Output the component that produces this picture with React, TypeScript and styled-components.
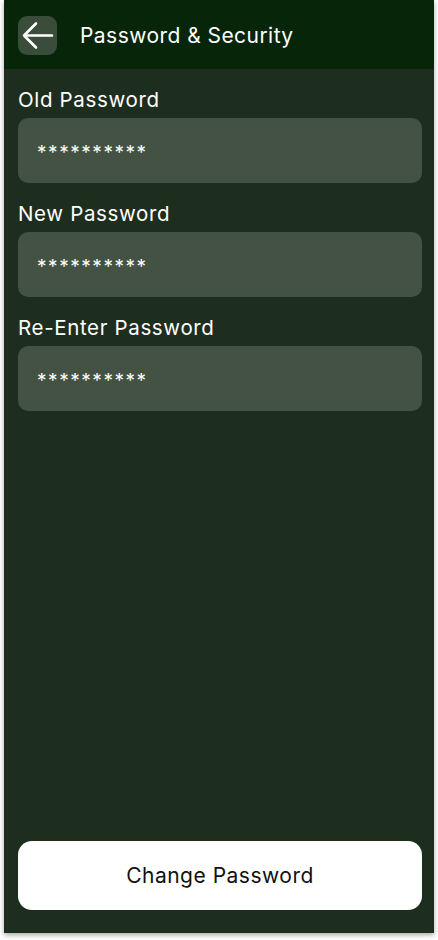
import React from "react";
import styled, { createGlobalStyle } from "styled-components";

const Global = createGlobalStyle`
  html, body { margin: 0; padding: 0; background: #ffffff; }
  body { font-family: Inter, "Noto Sans", sans-serif; }
  * { box-sizing: border-box; }
`;

const Page = styled.div`
  padding: 0 4px 7px 4px;
  width: 438px;
`;

const Frame = styled.div`
  width: 430px;
  height: 933px;
  background: #1e2e1e;
  display: flex;
  flex-direction: column;
  box-shadow: 0 2px 5px rgba(0, 0, 0, 0.35);
`;

const Header = styled.header`
  height: 69px;
  background: #072508;
  display: flex;
  align-items: center;
  padding: 0 14px;
  gap: 23px;
  flex-shrink: 0;
`;

const BackButton = styled.button`
  width: 39px;
  height: 39px;
  border: none;
  border-radius: 9px;
  background: #3a4d3a;
  display: flex;
  align-items: center;
  justify-content: center;
  padding: 0;
  margin-top: 1px;
  cursor: pointer;
`;

const Title = styled.h1`
  margin: 2px 0 0 0;
  font-size: 21px;
  font-weight: 400;
  color: #ffffff;
  letter-spacing: 0.45px;
`;

const Content = styled.main`
  flex: 1;
  display: flex;
  flex-direction: column;
  padding: 18px 12px 23px 14px;
`;

const Fields = styled.div`
  display: flex;
  flex-direction: column;
  gap: 18px;
`;

const Field = styled.div`
  display: flex;
  flex-direction: column;
  gap: 6px;
`;

const Label = styled.label`
  font-size: 20.5px;
  line-height: 24px;
  padding-top: 1px;
  color: #ffffff;
  letter-spacing: 0.65px;
`;

const InputBox = styled.div`
  height: 65px;
  flex-shrink: 0;
  border-radius: 10px;
  background: #435243;
  display: flex;
  align-items: center;
  padding: 4px 19px 0 19px;
  color: #ffffff;
  font-size: 19px;
  letter-spacing: 1.55px;
`;

const Spacer = styled.div`
  flex: 1;
`;

const SubmitButton = styled.button`
  height: 69px;
  flex-shrink: 0;
  width: 100%;
  border: none;
  border-radius: 14px;
  background: #ffffff;
  color: #111111;
  font-family: Inter, "Noto Sans", sans-serif;
  font-size: 21px;
  font-weight: 400;
  letter-spacing: 0.5px;
  cursor: pointer;
`;

const fields = ["Old Password", "New Password", "Re-Enter Password"];

export default function App() {
  return (
    <>
      <Global />
      <Page>
        <Frame>
          <Header>
            <BackButton aria-label="Back">
              <svg width="39" height="39" viewBox="0 0 39 39" fill="none">
                <path
                  d="M6 19.5H34M18 7.5L6 19.5L18 31.5"
                  stroke="#ffffff"
                  strokeWidth="2.6"
                  strokeLinecap="round"
                  strokeLinejoin="round"
                />
              </svg>
            </BackButton>
            <Title>Password &amp; Security</Title>
          </Header>
          <Content>
            <Fields>
              {fields.map((f) => (
                <Field key={f}>
                  <Label>{f}</Label>
                  <InputBox>**********</InputBox>
                </Field>
              ))}
            </Fields>
            <Spacer />
            <SubmitButton>Change Password</SubmitButton>
          </Content>
        </Frame>
      </Page>
    </>
  );
}
